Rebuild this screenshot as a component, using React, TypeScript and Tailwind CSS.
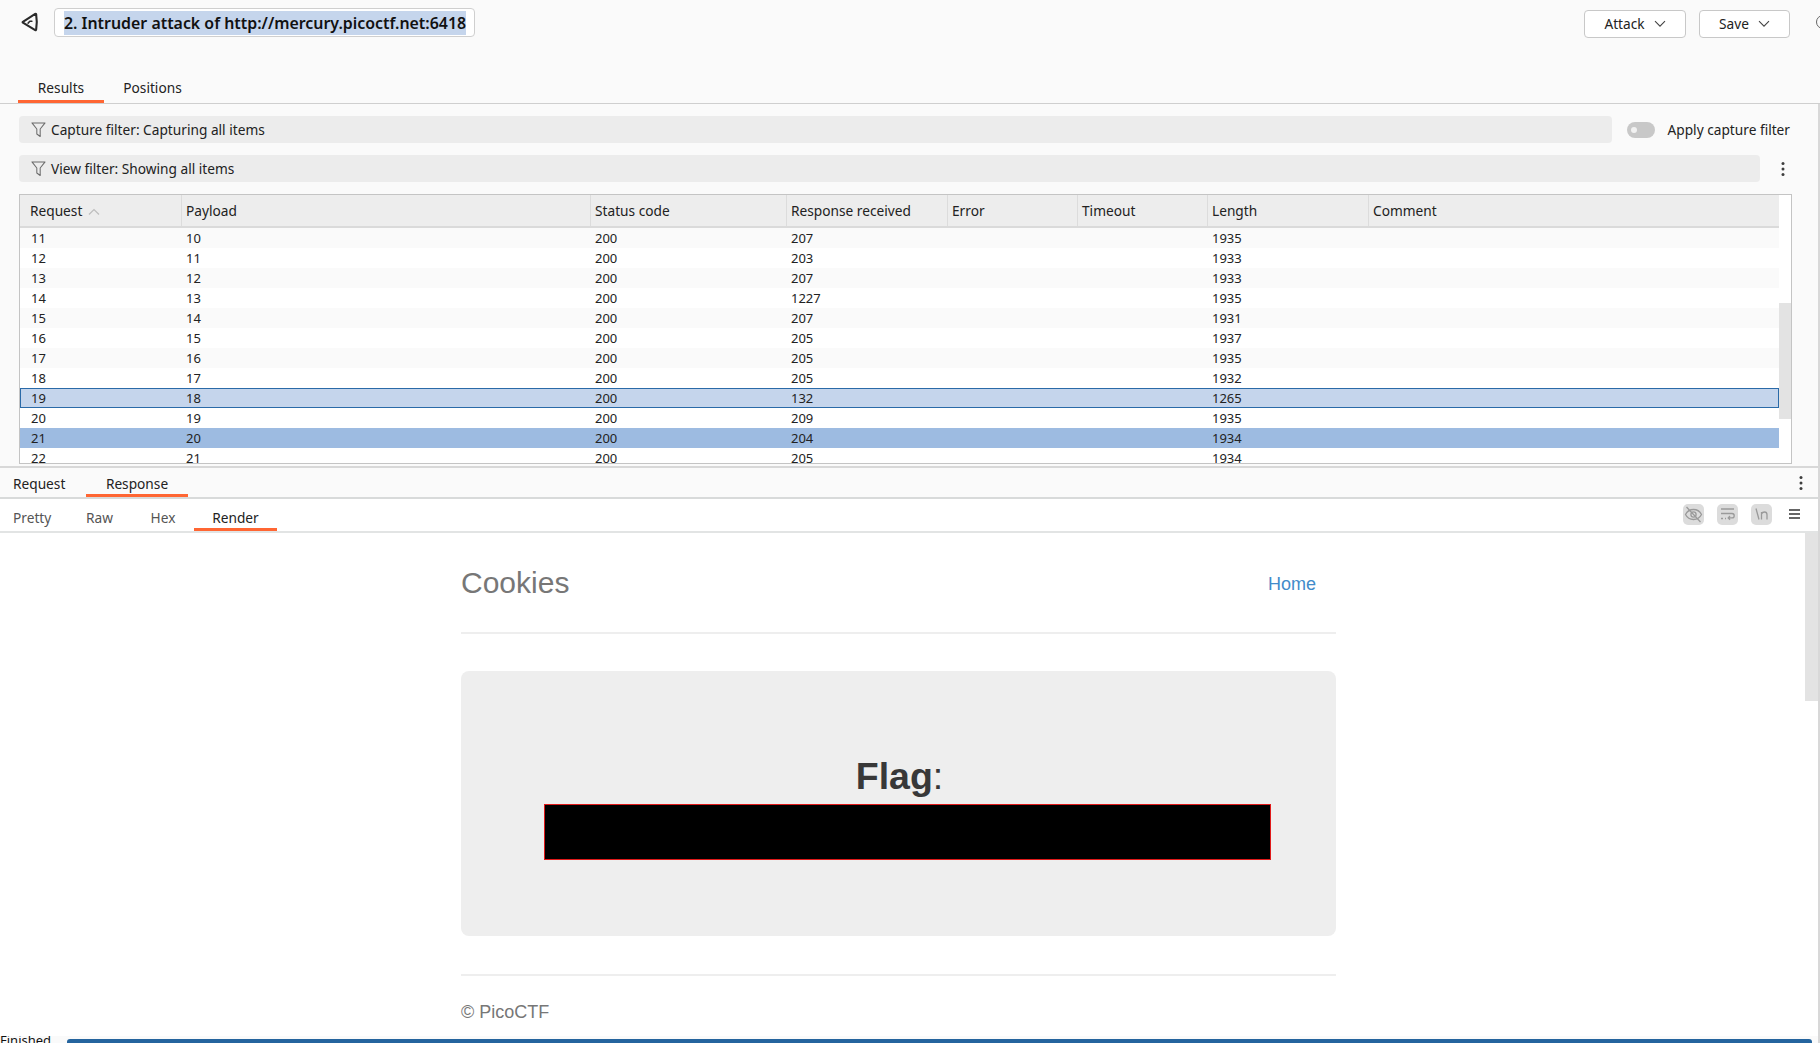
import type { ReactNode } from "react";

const rows: [number, number, number, number, number][] = [
  [11, 10, 200, 207, 1935],
  [12, 11, 200, 203, 1933],
  [13, 12, 200, 207, 1933],
  [14, 13, 200, 1227, 1935],
  [15, 14, 200, 207, 1931],
  [16, 15, 200, 205, 1937],
  [17, 16, 200, 205, 1935],
  [18, 17, 200, 205, 1932],
  [19, 18, 200, 132, 1265],
  [20, 19, 200, 209, 1935],
  [21, 20, 200, 204, 1934],
  [22, 21, 200, 205, 1934],
];

const cols = [
  { name: "Request", w: "w-[162px]" },
  { name: "Payload", w: "w-[409px]" },
  { name: "Status code", w: "w-[196px]" },
  { name: "Response received", w: "w-[161px]" },
  { name: "Error", w: "w-[130px]" },
  { name: "Timeout", w: "w-[130px]" },
  { name: "Length", w: "w-[161px]" },
  { name: "Comment", w: "flex-1" },
];

function Funnel() {
  return (
    <svg width="15" height="17" viewBox="0 0 16 17" fill="none" stroke="#6b6b6b" strokeWidth="1.1" className="shrink-0">
      <path d="M1 1.5h14L9.800 8v8l-3.600-2.700V8z" strokeLinejoin="round" />
    </svg>
  );
}

function Dots() {
  return (
    <svg width="4" height="16" viewBox="0 0 4 16" fill="#3d3d3d">
      <circle cx="2" cy="2.5" r="1.5" />
      <circle cx="2" cy="8" r="1.5" />
      <circle cx="2" cy="13.5" r="1.5" />
    </svg>
  );
}

function Chevron() {
  return (
    <svg width="12" height="8" viewBox="0 0 12 8" fill="none" stroke="#444" strokeWidth="1.1">
      <path d="M1 1.2l5 5 5-5" />
    </svg>
  );
}

function Tab({ label, active, w, muted, extra }: { label: string; active?: boolean; w: string; muted?: boolean; extra: string }) {
  return (
    <div
      className={`${w} ${extra} h-full flex items-center border-b-[3px] ${
        active ? "border-[#ff6633]" : "border-transparent"
      } ${muted ? "text-[#555]" : "text-[#222]"}`}
    >
      {label}
    </div>
  );
}

function IconBox({ children }: { children: ReactNode }) {
  return (
    <div className="w-[21px] h-[21px] rounded-[5px] bg-[#dcdcdc] flex items-center justify-center">{children}</div>
  );
}

export default function App() {
  return (
    <div
      className="w-[1820px] h-[1043px] overflow-hidden bg-[#fafafa] flex flex-col text-[13.7px] text-[#222]"
      style={{ fontFamily: '"Noto Sans", "Open Sans", sans-serif' }}
    >
      {/* Title row */}
      <div className="h-[72px] shrink-0 flex items-start pt-[8px]">
        <svg width="18" height="20" viewBox="0 0 19 20" fill="none" stroke="#2a2a2a" strokeWidth="2.200" className="ml-[21px] mt-[4px]" strokeLinejoin="round" strokeLinecap="round">
          <path d="M15 1.500L2 9.800c-.4.300-.4.600 0 .9L15 18.500c.6.300 1 0 1-.6.900-5.300.9-10.400 0-15.800 0-.6-.4-.9-1-.6z" />
          <path d="M11.500 9.200l-2.200.1L7.500 11.200" strokeWidth="1.600" />
        </svg>
        <div className="ml-[15px] w-[421px] h-[29px] bg-white border border-[#cfcfcf] rounded-[4px] flex items-center pl-[9px]">
          <span className="bg-[#c5d5ec] text-[#111] font-semibold text-[15.9px] leading-[24px] whitespace-nowrap">
            2. Intruder attack of http://mercury.picoctf.net:6418
          </span>
        </div>
        <div className="flex-1" />
        <div className="w-[102px] h-[28px] mt-[2px] bg-white border border-[#c8c8c8] rounded-[4px] flex items-center justify-center gap-[9px]">
          Attack <Chevron />
        </div>
        <div className="ml-[13px] w-[91px] h-[28px] mt-[2px] bg-white border border-[#c8c8c8] rounded-[4px] flex items-center justify-center gap-[9px]">
          Save <Chevron />
        </div>
        <div className="ml-[26px] mr-[-10px] mt-[7px] w-[14px] h-[14px] rounded-full border-[1.5px] border-[#666] shrink-0" />
      </div>

      {/* Results / Positions */}
      <div className="h-[32px] shrink-0 flex pl-[18px] border-b border-[#cfcfcf]">
        <Tab label="Results" active w="w-[86px]" extra="justify-center pt-[5px]" />
        <Tab label="Positions" w="w-[97px]" extra="justify-center pt-[5px]" />
      </div>

      {/* Results pane */}
      <div className="shrink-0 h-[362px] pl-[19px] pr-[26px] border-r-2 border-[#d8d8d8] flex flex-col">
        <div className="h-[27px] mt-[12px] shrink-0 flex items-center">
          <div className="flex-1 h-full bg-[#ececec] rounded-[4px] flex items-center pl-[12px] gap-[5px]">
            <Funnel />
            <span className="pt-[2px]">Capture filter: Capturing all items</span>
          </div>
          <div className="ml-[15px] w-[28px] h-[16px] rounded-full bg-[#c8c8c8] flex items-center pl-[4px]">
            <div className="w-[6px] h-[6px] rounded-full bg-[#f2f2f2]" />
          </div>
          <span className="ml-[13px] mr-[2px] pt-[2px]">Apply capture filter</span>
        </div>
        <div className="h-[27px] mt-[12px] shrink-0 flex items-center">
          <div className="flex-1 h-full bg-[#ececec] rounded-[4px] flex items-center pl-[12px] gap-[5px]">
            <Funnel />
            <span className="pt-[2px]">View filter: Showing all items</span>
          </div>
          <div className="w-[32px] flex justify-center pl-[14px]">
            <Dots />
          </div>
        </div>

        {/* Table */}
        <div className="mt-[12px] h-[270px] bg-white border border-[#c4c4c4] flex overflow-hidden">
          <div className="w-[1759px] shrink-0 flex flex-col">
            <div className="h-[33px] shrink-0 bg-[#ededed] border-b-2 border-[#dadada] flex">
              {cols.map((c, i) => (
                <div
                  key={c.name}
                  className={`${c.w} flex items-center border-r border-[#dcdcdc] pt-[2px] ${i === 0 ? "pl-[10px]" : "pl-[4px]"} ${i === 7 ? "border-r-0" : ""}`}
                >
                  {c.name}
                  {i === 0 && (
                    <svg width="12" height="8" viewBox="0 0 12 8" fill="none" stroke="#bdbdbd" strokeWidth="1.2" className="ml-[6px]">
                      <path d="M1 6.5l5-5 5 5" />
                    </svg>
                  )}
                </div>
              ))}
            </div>
            <div className="text-[13px]">
              {rows.map((r, i) => {
                const sel = r[0] === 19;
                const sel2 = r[0] === 21;
                const bg = sel
                  ? "bg-[#c5d5ec] shadow-[inset_0_0_0_1px_#2a6aa8]"
                  : sel2
                    ? "bg-[#9dbbe1]"
                    : i % 2 === 0
                      ? "bg-[#fafafa]"
                      : "bg-white";
                return (
                  <div key={r[0]} className={`h-[20px] shrink-0 flex items-center leading-[20px] ${bg}`}>
                    <div className="w-[162px] pl-[11px]">{r[0]}</div>
                    <div className="w-[409px] pl-[4px]">{r[1]}</div>
                    <div className="w-[196px] pl-[4px]">{r[2]}</div>
                    <div className="w-[161px] pl-[4px]">{r[3]}</div>
                    <div className="w-[130px]" />
                    <div className="w-[130px]" />
                    <div className="w-[161px] pl-[4px]">{r[4]}</div>
                  </div>
                );
              })}
            </div>
          </div>
          <div className="flex-1 pt-[108px]">
            <div className="h-[116px] bg-[#e3e3e3]" />
          </div>
        </div>
      </div>

      {/* Lower pane */}
      <div className="flex-1 min-h-0 border-t-2 border-[#d8d8d8] border-r-2 flex flex-col bg-white">
        <div className="h-[31px] shrink-0 bg-[#fafafa] border-b-2 border-[#d8dada] flex items-center justify-between">
          <div className="h-full flex">
            <Tab label="Request" w="w-[86px]" extra="pl-[13px] pt-[6px]" />
            <Tab label="Response" active w="w-[102px]" extra="justify-center pt-[6px]" />
          </div>
          <div className="mr-[15px]">
            <Dots />
          </div>
        </div>
        <div className="h-[34px] shrink-0 bg-white border-b-2 border-[#e2e4e4] flex items-center justify-between">
          <div className="h-full flex">
            <Tab label="Pretty" muted w="w-[67px]" extra="pl-[13px] pt-[9px]" />
            <Tab label="Raw" muted w="w-[65px]" extra="justify-center pt-[9px]" />
            <Tab label="Hex" muted w="w-[62px]" extra="justify-center pt-[9px]" />
            <Tab label="Render" active w="w-[83px]" extra="justify-center pt-[9px]" />
          </div>
          <div className="mr-[18px] mb-[2px] flex items-center gap-[13px]">
            <IconBox>
              <svg width="19" height="17" viewBox="0 0 19 17" fill="none" stroke="#9a9a9a" strokeWidth="1.3">
                <path d="M1.500 8.500C3.500 4.700 6.500 3.500 9.500 3.500s6 1.200 8 5c-2 3.800-5 5-8 5s-6-1.200-8-5z" />
                <circle cx="9.500" cy="8.500" r="2.600" />
                <path d="M2.500 1l14 15" />
              </svg>
            </IconBox>
            <IconBox>
              <svg width="15" height="14" viewBox="0 0 15 14" fill="none" stroke="#9a9a9a" strokeWidth="1.3">
                <path d="M1 2h13M1 6.500h11a2.200 2.200 0 0 1 0 4.400H8.500M10 9l-1.800 1.900 1.800 1.900M1 11.500h2M5 11.500h1" />
              </svg>
            </IconBox>
            <IconBox>
              <svg width="14" height="14" viewBox="0 0 14 14" fill="none" stroke="#9a9a9a" strokeWidth="1.3">
                <path d="M1 1.500l3 11M6.500 12.500V5M6.500 7c.6-1.500 1.800-2 3-2 1.700 0 2.500 1 2.500 2.700v4.800" />
              </svg>
            </IconBox>
            <svg width="11" height="10" viewBox="0 0 11 10" stroke="#333" strokeWidth="1.4" className="ml-[4px]">
              <path d="M0 1h11M0 5h11M0 9h11" />
            </svg>
          </div>
        </div>

        {/* Rendered page */}
        <div className="flex-1 min-h-0 flex overflow-hidden" style={{ fontFamily: '"Liberation Sans", Arial, sans-serif' }}>
          <div className="flex-1 flex justify-center">
            <div className="w-[875px] mr-[8px]">
              <div className="h-[101px] border-b-2 border-[#eeeeee] flex items-start justify-between pr-[20px] pt-[32px]">
                <span className="text-[30px] leading-[36px] text-[#777777]">Cookies</span>
                <span className="text-[18px] leading-[24px] mt-[7px] ml-[1px] text-[#428bca]">Home</span>
              </div>
              <div className="mt-[37px] h-[265px] bg-[#eeeeee] rounded-[8px] flex flex-col items-center pt-[85px]">
                <div className="text-[37.5px] leading-[40px] text-[#383838] ml-[2px]">
                  <b>Flag</b>:
                </div>
                <div className="w-[727px] h-[56px] ml-[17px] mt-[8px] bg-black border border-[#e01a1a]" />
              </div>
              <div className="mt-[38px] border-t-2 border-[#eeeeee] pt-[24px] text-[18px] leading-[24px] text-[#777777]">
                © PicoCTF
              </div>
            </div>
          </div>
          <div className="w-[13px] shrink-0">
            <div className="h-[168px] bg-[#e3e3e3]" />
          </div>
        </div>

        {/* Status row, cut by the bottom edge of the window */}
        <div className="h-[7px] shrink-0 bg-[#fafafa] flex items-end overflow-hidden">
          <div className="w-[67px] h-[7px] shrink-0 overflow-hidden">
            <div className="text-[13px] leading-[13px] mt-[-2px] text-[#111] whitespace-nowrap">Finished</div>
          </div>
          <div className="w-[1745px] h-[4px] bg-[#24649e] rounded-t-[3px]" />
        </div>
      </div>
    </div>
  );
}
